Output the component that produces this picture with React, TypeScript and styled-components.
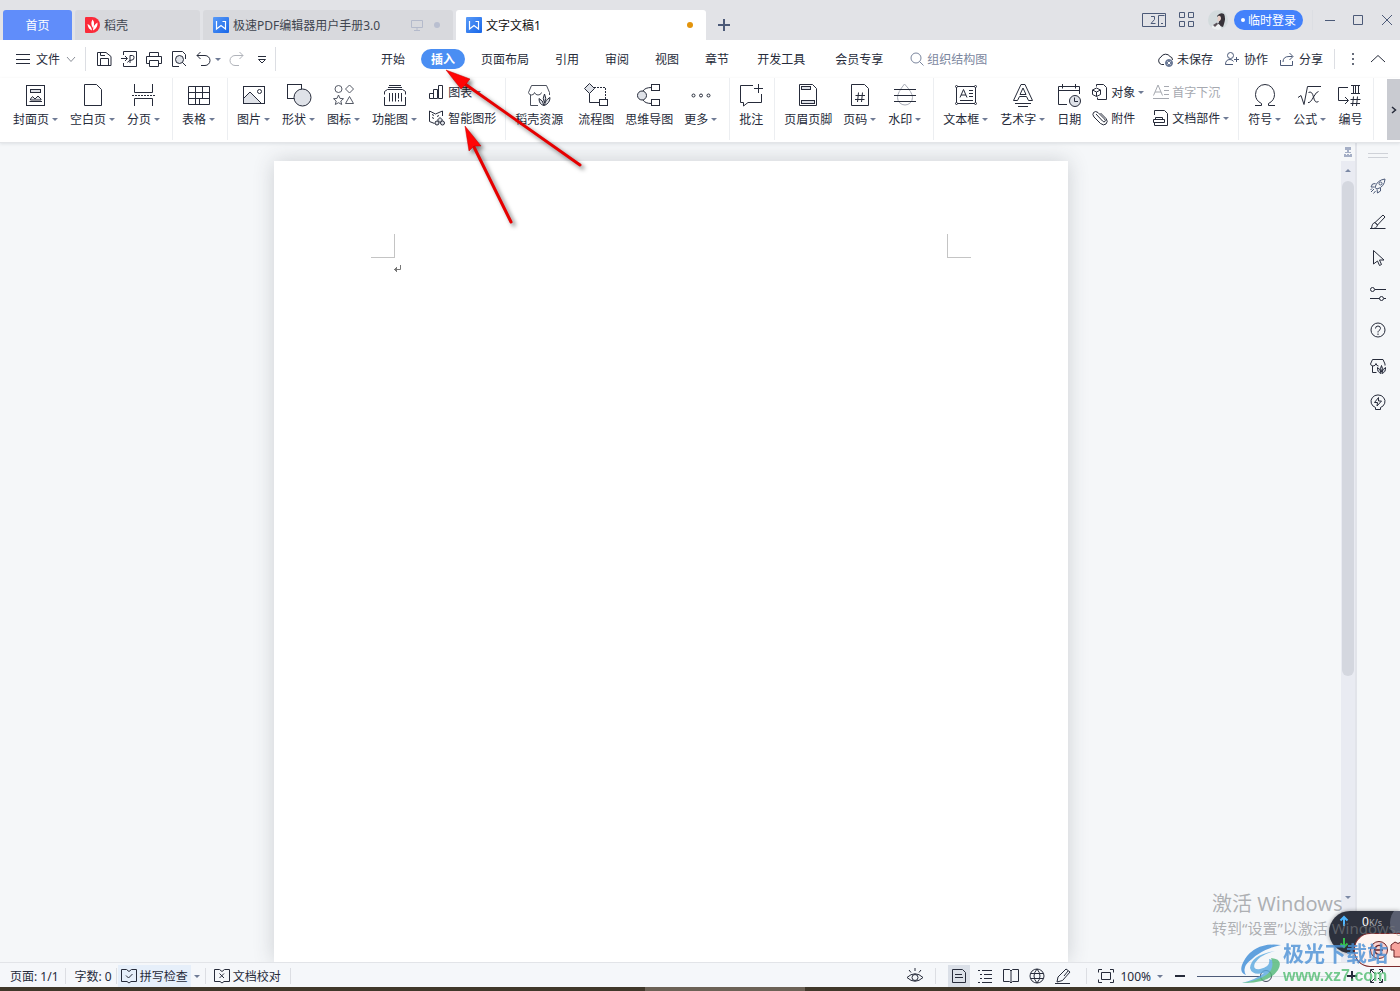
import React from "react";
import styled, { createGlobalStyle, css } from "styled-components";

const ink = "#262b3a";
const slate = "#4c5a78";
const muted = "#7b869e";

const GlobalStyle = createGlobalStyle`
  *, *::before, *::after { box-sizing: border-box; }
  body {
    margin: 0;
    background: #f5f7f9;
    color: ${ink};
    font: 12px/16px "Noto Sans", "Noto Sans CJK SC", sans-serif;
    overflow: hidden;
  }
  button, input { font: inherit; color: inherit; }
`;

/* ---------- shared parts ---------- */

const PlainButton = styled.button`
  display: flex;
  align-items: center;
  flex: none;
  margin: 0;
  padding: 0;
  border: 0;
  background: none;
  white-space: nowrap;
`;

const Label = styled.span`
  padding-top: 2px;
  white-space: nowrap;
`;

const IconSvg = styled.svg<{ $color?: string }>`
  display: block;
  flex: none;
  overflow: visible;
  fill: none;
  stroke: currentColor;
  ${(p) => p.$color && css`color: ${p.$color};`}
`;

type IconProps = { w?: number; h?: number; color?: string; children?: React.ReactNode };
const Icon = ({ w = 16, h = w, color, children }: IconProps) => (
  <IconSvg width={w} height={h} viewBox={`0 0 ${w} ${h}`} $color={color} aria-hidden="true">
    {children}
  </IconSvg>
);

const Caret = styled.span`
  flex: none;
  width: 0;
  height: 0;
  margin-left: 3px;
  border: 3px solid transparent;
  border-top-color: #6f7b95;
  border-bottom: 0;
`;

const Rule = styled.span<{ $h: number; $gap?: number }>`
  flex: none;
  width: 1px;
  height: ${(p) => p.$h}px;
  margin: 0 ${(p) => p.$gap ?? 0}px;
  background: #dcdee3;
`;

/* ---------- frame ---------- */

const Window = styled.div`
  position: relative;
  display: flex;
  flex-direction: column;
  height: 100vh;
  overflow: hidden;
`;

const TitleBar = styled.header`
  display: flex;
  align-items: flex-end;
  flex: none;
  height: 40px;
  padding-left: 3px;
  background: #e2e3e7;
`;

const TabStrip = styled.div`
  display: flex;
  gap: 3px;
`;

const DocTab = styled(PlainButton)<{ $width: number; $kind?: "home" | "active" }>`
  width: ${(p) => p.$width}px;
  height: 30px;
  padding: 0 13px 0 10px;
  gap: 4px;
  border-radius: 3px 3px 0 0;
  background: #d8d9dd;
  color: #40454f;
  ${(p) => p.$kind === "home" && css`justify-content: center; padding: 0; background: #608dfa; color: #fff;`}
  ${(p) => p.$kind === "active" && css`background: #fff; color: #111;`}
`;

const TabTail = styled.span`
  display: flex;
  align-items: center;
  gap: 11px;
  margin-left: auto;
`;

const Dot = styled.span<{ $color: string }>`
  width: 6px;
  height: 6px;
  border-radius: 50%;
  background: ${(p) => p.$color};
`;

const NewTab = styled(PlainButton)`
  height: 30px;
  padding: 0 11px;
  color: ${slate};
`;

const WindowTools = styled.div`
  display: flex;
  align-items: center;
  height: 40px;
  margin-left: auto;
  padding-right: 7px;
  color: ${slate};
`;

const WindowButton = styled(PlainButton)<{ $before?: number }>`
  margin-left: ${(p) => p.$before ?? 12}px;
`;

const LoginButton = styled(PlainButton)`
  height: 20px;
  margin: 0 9px 0 6px;
  padding: 0 7px;
  gap: 3px;
  border-radius: 10px;
  background: #4381fb;
  color: #fff;
`;

const LoginDot = styled.span`
  width: 4px;
  height: 4px;
  border-radius: 50%;
  background: #fff;
`;

/* ---------- menu row ---------- */

const MenuBar = styled.div`
  display: flex;
  align-items: center;
  flex: none;
  height: 38px;
  padding-left: 16px;
  background: #fff;
`;

const FileButton = styled(PlainButton)`
  gap: 6px;
  margin-right: 9px;
`;

const QuickTools = styled.div`
  display: flex;
  align-items: center;
  gap: 9px;
  padding: 0 6px 0 10px;
`;

const UndoButton = styled(PlainButton)`
  gap: 2px;
`;

const MenuNav = styled.nav`
  display: flex;
  align-items: center;
  gap: 6px;
  margin-left: 95px;
`;

const MenuTab = styled(PlainButton)<{ $active?: boolean; $wide?: boolean }>`
  height: 20px;
  padding: 0 ${(p) => (p.$wide ? 12 : 10)}px;
  border-radius: 10px;
  ${(p) => p.$active && css`background: #4a8ef3; color: #fff; font-weight: 700;`}
`;

const SearchField = styled.label`
  display: flex;
  align-items: center;
  gap: 3px;
  margin-left: 9px;
  color: ${muted};
`;

const SearchInput = styled.input`
  width: 80px;
  height: 20px;
  padding: 0;
  border: 0;
  outline: 0;
  background: none;
  &::placeholder { color: ${muted}; opacity: 1; }
`;

const MenuActions = styled.div`
  display: flex;
  align-items: center;
  gap: 11px;
  margin-left: auto;
  padding-right: 15px;
`;

const MenuAction = styled(PlainButton)`
  gap: 4px;
`;

const MenuMarks = styled.div`
  display: flex;
  align-items: center;
  gap: 12px;
`;

/* ---------- ribbon ---------- */

const Ribbon = styled.div`
  position: relative;
  z-index: 2;
  display: flex;
  flex: none;
  height: 65px;
  border-bottom: 1px solid #e3e5e8;
  background: #fff;
  box-shadow: 0 1px 3px rgba(60, 70, 90, 0.12);
`;

const RibbonItems = styled.div`
  display: flex;
  flex: 1;
  min-width: 0;
  overflow: hidden;
  padding-left: 13px;
`;

const RibbonRule = styled.span`
  flex: none;
  width: 1px;
  height: 62px;
  margin-right: 9px;
  background: #eceef1;
`;

const RibbonButton = styled(PlainButton)<{ $menu?: boolean; $after?: number }>`
  flex-direction: column;
  justify-content: flex-start;
  gap: 3px;
  height: 62px;
  margin-right: ${(p) => p.$after ?? 11}px;
  padding: 5px ${(p) => (p.$menu ? 1 : 0)}px 0 0;
`;

const ButtonLabel = styled.span`
  display: flex;
  align-items: center;
`;

const RibbonColumn = styled.div`
  display: flex;
  flex-direction: column;
  flex: none;
  margin-right: 9px;
  padding-top: 1px;
`;

const RowButton = styled(PlainButton)<{ $off?: boolean }>`
  gap: 3px;
  height: 26px;
  ${(p) => p.$off && css`color: #a6a9b0;`}
`;

const RibbonScroll = styled(PlainButton)`
  justify-content: center;
  width: 13px;
  height: 61px;
  margin-top: 1px;
  background: #c9cbd1;
`;

/* ---------- work area ---------- */

const Body = styled.main`
  display: flex;
  flex: 1;
  min-height: 0;
`;

const Canvas = styled.section`
  display: flex;
  justify-content: center;
  flex: 1;
  min-width: 0;
  padding-top: 18px;
  overflow: hidden;
`;

const Sheet = styled.article`
  flex: 0 1 794px;
  padding: 73px 97px 0;
  background: #fff;
  box-shadow: 0 0 20px rgba(50, 55, 65, 0.2);
`;

const MarginMarks = styled.div`
  display: flex;
  justify-content: space-between;
`;

const Corner = styled.span<{ $side: "left" | "right" }>`
  width: 24px;
  height: 24px;
  border-bottom: 1px solid #c4c4c4;
  ${(p) => (p.$side === "left" ? css`border-right: 1px solid #c4c4c4;` : css`border-left: 1px solid #c4c4c4;`)}
`;

const Paragraph = styled.p`
  margin: 6px 0 0 22px;
`;

const ScrollGutter = styled.div`
  display: flex;
  flex-direction: column;
  align-items: center;
  flex: none;
  width: 16px;
  border-right: 2px solid #e2e4ea;
`;

const RulerToggle = styled(PlainButton)`
  height: 18px;
  color: #a5afc6;
`;

const ScrollTrack = styled.div`
  display: flex;
  flex-direction: column;
  align-items: center;
  flex: 1;
  align-self: stretch;
  padding-bottom: 54px;
  background: #e9ebf2;
`;

const ScrollArrow = styled(PlainButton)`
  justify-content: center;
  height: 20px;
  color: #7c89a5;
`;

const ScrollRange = styled.div`
  flex: 1;
  width: 12px;
`;

const ScrollThumb = styled.div`
  height: 70%;
  border-radius: 6px;
  background: #d4d7df;
`;

const SideBar = styled.aside`
  display: flex;
  flex-direction: column;
  align-items: center;
  flex: none;
  gap: 20px;
  width: 43px;
  padding: 10px 2px 0 0;
`;

const Grip = styled.span`
  width: 20px;
  height: 5px;
  border: solid #cfd2d8;
  border-width: 1px 0;
`;

/* ---------- status bar ---------- */

const StatusBar = styled.footer`
  display: flex;
  align-items: center;
  flex: none;
  height: 25px;
  padding: 2px 13px 0 10px;
  border-top: 1px solid #e2e4e8;
  background: #f5f7fa;
`;

const StatusButton = styled(PlainButton)<{ $tint?: string }>`
  height: 22px;
  padding: 0 3px;
  gap: 3px;
  background: ${(p) => p.$tint ?? "none"};
`;

const StatusRight = styled.div`
  display: flex;
  align-items: center;
  margin-left: auto;
`;

const ViewButton = styled(PlainButton)<{ $on?: boolean }>`
  justify-content: center;
  width: 22px;
  height: 22px;
  margin-right: 4px;
  background: ${(p) => (p.$on ? "#dbe0e8" : "none")};
`;

const ZoomRange = styled.input`
  width: 140px;
  height: 14px;
  margin: 0 10px 0 7px;
  appearance: none;
  background: linear-gradient(${slate}, ${slate}) 0 50% / 64px 1px no-repeat,
    linear-gradient(#d3d7de, #d3d7de) 0 50% / 100% 1px no-repeat;
  &::-webkit-slider-thumb {
    appearance: none;
    width: 12px;
    height: 12px;
    border: 1px solid #3e4659;
    border-radius: 50%;
    background: #f5f7fa;
  }
`;

const Taskbar = styled.div`
  display: flex;
  justify-content: center;
  flex: none;
  height: 4px;
  padding-left: 50px;
  background: #40382a;
`;

const TaskbarItem = styled.span`
  width: 160px;
  background: #6c6256;
`;

/* ---------- overlays ---------- */

const ArrowLayer = styled.svg`
  position: absolute;
  z-index: 5;
  left: 420px;
  top: 60px;
  pointer-events: none;
  filter: drop-shadow(3px 3px 2px rgba(0, 0, 0, 0.5));
`;

const Activation = styled.div`
  position: absolute;
  z-index: 7;
  right: 0;
  bottom: 52px;
  width: 188px;
  overflow: hidden;
  color: rgba(125, 128, 132, 0.6);
  white-space: nowrap;
  pointer-events: none;
`;

const ActivationTitle = styled.div`
  font-size: 20px;
  line-height: 26px;
`;

const ActivationNote = styled.div`
  font-size: 15px;
  line-height: 22px;
`;

const SpeedPill = styled.div`
  position: absolute;
  z-index: 4;
  right: 0;
  bottom: 38px;
  display: flex;
  gap: 13px;
  width: 71px;
  height: 42px;
  padding: 3px 0 0 10px;
  border-radius: 21px 0 0 21px;
  overflow: hidden;
  background: #2d313d;
  color: #fff;
  box-shadow: 0 0 4px rgba(0, 0, 0, 0.4);
`;

const SpeedUnit = styled.span`
  color: #a9acb3;
  font-size: 9px;
`;

const SpeedOrb = styled.span`
  position: absolute;
  right: -30px;
  top: -8px;
  width: 40px;
  height: 40px;
  border-radius: 50%;
  background: #5a5f70;
`;

const ImeBadge = styled.div`
  position: absolute;
  z-index: 6;
  right: 0;
  bottom: 24px;
  display: flex;
  align-items: center;
  width: 46px;
  height: 34px;
  padding-left: 14px;
  border: 1px solid #7d2a2c;
  border-right: 0;
  border-radius: 16px 0 0 16px;
  background: #fff4f0;
  color: #6b2226;
`;

const SiteMark = styled.div`
  position: absolute;
  z-index: 8;
  right: 12px;
  bottom: 6px;
  display: flex;
  align-items: center;
  gap: 1px;
  opacity: 0.8;
  pointer-events: none;
`;

const SiteText = styled.div`
  padding-bottom: 3px;
  color: #4a90d6;
  font-size: 21px;
  font-weight: 700;
  line-height: 22px;
  white-space: nowrap;
`;

const SiteUrl = styled.div`
  color: #52bd72;
  font: 700 16px/18px "Liberation Sans", sans-serif;
`;

/* ---------- drawings ---------- */

const grey = "#dfe2e8";

const WpsLogo = () => (
  <Icon w={16}>
    <defs>
      <linearGradient id="wps" x1="0" y1="0" x2="1" y2="1">
        <stop offset="0" stopColor="#5a9bf8" />
        <stop offset="1" stopColor="#1766e8" />
      </linearGradient>
    </defs>
    <rect width="16" height="16" rx="1" fill="url(#wps)" stroke="none" />
    <path d="M3.500 4V12L8 8.500L12.500 12V4.500H9.500" stroke="#fff" strokeWidth="1.200" />
  </Icon>
);

const DocerLogo = () => (
  <Icon w={15} h={16}>
    <path d="M1 0H7A8 8 0 0 1 7 16H1Q0 16 0 15V1Q0 0 1 0Z" fill="#fb2b3a" stroke="none" />
    <path d="M7.500 2.500Q10.500 6 8 11Q5 7 7.500 2.500ZM12.500 5.500Q13 11 8 13.500Q8 8 12.500 5.500ZM2.500 7Q6.500 8.500 7 13.500Q3 12 2.500 7Z" fill="#fff" stroke="none" />
  </Icon>
);

const Avatar = () => (
  <Icon w={20}>
    <clipPath id="face"><circle cx="10" cy="10" r="10" /></clipPath>
    <g clipPath="url(#face)" stroke="none">
      <rect width="20" height="20" fill="#d3dbdd" />
      <path d="M9 6Q12 2 16 4Q18 8 16 14L15 17L12 16L10 14Q13 9 9 6Z" fill="#38333a" />
      <path d="M10 6Q13 5 13 9Q12 12 9.500 11Z" fill="#e8cfc6" />
      <path d="M4 16Q8 12 12 15L14 20H3Z" fill="#eef1f1" />
      <path d="M5 15L9 12.500L10 14L7 17Z" fill="#5b5258" />
    </g>
  </Icon>
);

const art = {
  cover: (
    <>
      <rect x="2.500" y="2.500" width="18" height="20" />
      <rect x="6.500" y="6.500" width="10" height="3" fill={grey} />
      <path d="M5.500 18.500H18M6.500 16L8.500 13.500L11 16L14 13L17 16V17H6.500Z" fill={grey} />
    </>
  ),
  blank: <path d="M3.500 1.500H15.500L20.500 6.500V22.500H3.500Z" />,
  pageBreak: (
    <>
      <path d="M2.500 1V9.500H20.500V1M2.500 23V15.500H20.500V23" />
      <path d="M0 12.500H23" strokeDasharray="2 1" />
    </>
  ),
  table: <path d="M1.500 3.500H22.500V21.500H1.500ZM1.500 9.500H22.500M1.500 15.500H22.500M8.500 3.500V21.500M15.500 3.500V15.500M12.500 15.500V21.500" />,
  picture: (
    <>
      <path d="M2 15L8 9L19.500 20.500H2Z" fill={grey} stroke="none" />
      <rect x="1.500" y="3.500" width="21" height="17" />
      <path d="M2 15L8 9L19.500 20.500" />
      <circle cx="17.500" cy="8.500" r="2" />
    </>
  ),
  shapes: (
    <>
      <rect x=".5" y="1.500" width="14" height="14" />
      <circle cx="15.500" cy="14.500" r="8.500" fill={grey} />
    </>
  ),
  glyphs: (
    <g stroke="#555a66">
      <circle cx="6.500" cy="6" r="3.500" />
      <path d="M17.500 2L21.500 6L17.500 10L13.500 6ZM17.500 13.500L21.500 20.500H13.500Z" />
      <path d="M6.500 12L8 15.400L11.500 15.700L8.800 18L9.700 21.500L6.500 19.700L3.300 21.500L4.200 18L1.500 15.700L5 15.400Z" />
    </g>
  ),
  functionChart: (
    <>
      <path d="M6 2.500H18M5 4.500H19M1.500 11.500V8.500L4.500 6.500H19.500L22.500 8.500V11.500M4 22.500H1.500V14M20 22.500H22.500V14M4 22.500H20" />
      <path d="M6.500 10V18.500M9.500 10V18.500M12.500 10V18.500M15.500 10V15.500M15.500 17V18.500M18.500 10V18.500" />
    </>
  ),
  docer: (
    <>
      <path d="M11 22.500H3.500V12M1.500 9.500L4.500 2.500H19.500L22.500 9.500V12M1.500 9.500Q2 12 4.500 12Q7 12 7.500 9.500Q8.500 12 11 12Q14 12 14.500 9.500" stroke="#4b505c" />
      <path d="M17.500 11Q20 15 17.500 20Q15 15 17.500 11ZM23 14.500Q23 20 17.500 22.500Q18 17 23 14.500ZM12 15.500Q16 17 17 22.500Q12 21.500 12 15.500Z" fill={grey} />
    </>
  ),
  flow: (
    <>
      <path d="M5.500 .5L10.500 5.500L5.500 10.500L.5 5.500Z" fill={grey} />
      <path d="M10 4.500H21.500V16" strokeDasharray="2 1" />
      <path d="M5.500 10.500V19.500H15.500" />
      <rect x="15.500" y="16.500" width="8" height="6" />
    </>
  ),
  mind: (
    <>
      <path d="M6 8Q8 4.500 14.500 4.500M6 17Q8 20.500 14.500 20.500" />
      <circle cx="5" cy="12.500" r="4.500" fill={grey} />
      <rect x="14.500" y="1.500" width="8" height="6" />
      <rect x="14.500" y="16.500" width="8" height="6" />
    </>
  ),
  more: (
    <>
      <circle cx="4.500" cy="12.500" r="1.500" />
      <circle cx="12" cy="12.500" r="1.500" />
      <circle cx="19.500" cy="12.500" r="1.500" />
    </>
  ),
  comment: <path d="M14 2.500H1.500V19.500H4.500V23L9 19.500H22.500V11M19.500 1V10M15 5.500H24" />,
  header: (
    <>
      <path d="M3.500 1.500H16.500L20.500 5.500V22.500H3.500Z" />
      <rect x="5.500" y="3.500" width="9" height="3" fill={grey} />
      <rect x="5.500" y="17.500" width="13" height="3" fill={grey} />
    </>
  ),
  pageNumber: <path d="M3.500 1.500H16.500L20.500 5.500V22.500H3.500ZM10.500 9.500L9.500 19M14.500 9.500L13.500 19M7.500 12.500H17M7 16.500H16.500" />,
  watermark: (
    <>
      <path d="M11.500 1Q19.500 9.500 19.500 14.500A7.500 7.500 0 0 1 4.500 14.500Q4.500 9.500 11.500 1Z" stroke="#a9adb8" />
      <path d="M1 6.500H23M1 12.500H23M1 18.500H23" />
    </>
  ),
  textBox: (
    <>
      <rect x="2.500" y="3.500" width="19" height="17" />
      <path d="M6 14.500L9.500 6.500L13 14.500M7 12H12M15 7.500H19M15 10.500H19M15 13.500H19M6 17.500H19" />
      <g fill="#fff">
        <circle cx="2.500" cy="3.500" r="1" />
        <circle cx="21.500" cy="3.500" r="1" />
        <circle cx="2.500" cy="20.500" r="1" />
        <circle cx="21.500" cy="20.500" r="1" />
      </g>
    </>
  ),
  wordArt: <path d="M2.500 17.500L10 1.500H14L21.500 17.500H17.500L15.500 13.500H8.500L6.500 17.500ZM9 11.500L12 5L15 11.500ZM4 20.500H20M7 23.500H17" />,
  date: (
    <>
      <path d="M10 21.500H1.500V3.500H22.500V11M1.500 7.500H22.500M5.500 1V5.500M18.500 1V5.500" />
      <circle cx="18" cy="18" r="5.500" fill={grey} />
      <path d="M17.500 14.500V18.500H21" />
    </>
  ),
  omega: <path d="M2 22.500H8.500V20.500Q2.500 17.500 2.500 11.500A9.500 10 0 0 1 21.500 11.500Q21.500 17.500 15.500 20.500V22.500H22" />,
  formula: <path d="M0 14.500L3 12.500L6 21.500L9.500 3.500H23M10.500 9.500Q14 7.500 15.500 14Q17 21 20.500 18.500M20.500 8.500Q18.500 8.500 15.500 14Q12 20.500 10 19.500" />,
  numbering: (
    <path d="M10 4.500H.5V17.500H10M7 14L10.500 17.500L7 21M13 2.500H22M13 10.500H22M15.500 2.500V10.500M17.500 2.500V10.500M20.500 2.500V10.500M15.500 13.500L14.500 23M19.500 13.500L18.500 23M12.500 16.500H22.500M12.500 20.500H22" />
  ),
};

type ToolProps = { label: string; icon: keyof typeof art; menu?: boolean; after?: number };
const Tool = ({ label, icon, menu, after }: ToolProps) => (
  <RibbonButton type="button" $menu={menu} $after={after}>
    <Icon w={24}>{art[icon]}</Icon>
    <ButtonLabel>
      <Label>{label}</Label>
      {menu && <Caret />}
    </ButtonLabel>
  </RibbonButton>
);

type RowToolProps = { label: string; menu?: boolean; off?: boolean; children: React.ReactNode };
const RowTool = ({ label, menu, off, children }: RowToolProps) => (
  <RowButton type="button" $off={off}>
    <Icon>{children}</Icon>
    <ButtonLabel>
      <Label>{label}</Label>
      {menu && <Caret />}
    </ButtonLabel>
  </RowButton>
);

export default function App() {
  return (
    <Window>
      <GlobalStyle />

      <TitleBar>
        <TabStrip>
          <DocTab type="button" $width={69} $kind="home"><Label>首页</Label></DocTab>
          <DocTab type="button" $width={125}><DocerLogo /><Label>稻壳</Label></DocTab>
          <DocTab type="button" $width={250}>
            <WpsLogo /><Label>极速PDF编辑器用户手册3.0</Label>
            <TabTail>
              <Icon w={12} color="#b4bacb"><path d="M.5 1.500H11.500V8.500H.5ZM6 9V11M3 11.500H9" /></Icon>
              <Dot $color="#b9bfd0" />
            </TabTail>
          </DocTab>
          <DocTab type="button" $width={250} $kind="active">
            <WpsLogo /><Label>文字文稿1</Label>
            <TabTail><Dot $color="#e3940c" /></TabTail>
          </DocTab>
        </TabStrip>
        <NewTab type="button" aria-label="新建标签">
          <Icon w={14}><path d="M7 1V13M1 7H13" strokeWidth="2" /></Icon>
        </NewTab>
        <WindowTools>
          <WindowButton type="button" aria-label="窗口布局">
            <Icon w={24} h={16}>
              <path d="M23.500 3V1.500H.5V14.500H23.500V13M22.500 3.500H16.500V14.500M19 11.500H21M23.500 3V14.500" />
              <path d="M9 4.500H12.500V7.500L9 11.500H13.500" />
            </Icon>
          </WindowButton>
          <WindowButton type="button" aria-label="应用">
            <Icon w={16}><path d="M1.500 .5H6.500V5.500H1.500ZM10.500 .5H15.500V5.500H10.500ZM1.500 9.500H6.500V14.500H1.500ZM10.500 9.500H15.500V14.500H10.500Z" /></Icon>
          </WindowButton>
          <WindowButton type="button" $before={14} aria-label="账号"><Avatar /></WindowButton>
          <LoginButton type="button"><LoginDot /><Label>临时登录</Label></LoginButton>
          <Rule $h={20} />
          <WindowButton type="button" aria-label="最小化"><Icon w={10}><path d="M0 5.500H10" /></Icon></WindowButton>
          <WindowButton type="button" $before={18} aria-label="最大化"><Icon w={10}><path d="M.5 .5H9.500V9.500H.5Z" /></Icon></WindowButton>
          <WindowButton type="button" $before={18} aria-label="关闭"><Icon w={12}><path d="M1 1L11 11M11 1L1 11" /></Icon></WindowButton>
        </WindowTools>
      </TitleBar>

      <MenuBar>
        <FileButton type="button">
          <Icon w={14}><path d="M0 2.500H14M0 7.500H14M0 11.500H14" /></Icon>
          <Label>文件</Label>
          <Icon w={10} color="#8b8f98"><path d="M1 3L5 7.500L9 3" /></Icon>
        </FileButton>
        <Rule $h={24} />
        <QuickTools>
          <PlainButton type="button" aria-label="保存">
            <Icon><path d="M1.500 1.500H10L15 5.500V14.500H1.500ZM4.500 14.500V7.500H12.500V14.500M4.500 1.500V4.500H9" /></Icon>
          </PlainButton>
          <PlainButton type="button" aria-label="输出为PDF">
            <Icon><path d="M2.500 4V.5H15.500V15.500H2.500V12M0 7.500H6M4 5L6.500 7.500L4 10M9 12V4.500H11.500Q13 4.500 13 6.500Q13 9 11 9Q7.500 9 6.500 11.500" /></Icon>
          </PlainButton>
          <PlainButton type="button" aria-label="打印">
            <Icon><path d="M3.500 5V1.500H12.500V5M3.500 12.500H.5V5.500H15.500V12.500H12.500M3.500 9.500H12.500V15.500H3.500Z" /></Icon>
          </PlainButton>
          <PlainButton type="button" aria-label="打印预览">
            <Icon><path d="M8 15.500H1.500V.5H11.500L14.500 3.500V8M11 11L15 15" /><circle cx="8.500" cy="8.500" r="4" fill={grey} /></Icon>
          </PlainButton>
          <UndoButton type="button" aria-label="撤销">
            <Icon w={14} h={16}><path d="M4.500 1L1 4.500L4.500 8M1 4.500H9A4.500 4.500 0 0 1 9 14.500H5" /></Icon>
            <Caret />
          </UndoButton>
          <PlainButton type="button" aria-label="恢复">
            <Icon w={14} h={16} color="#b0b3ba"><path d="M9.500 1L13 4.500L9.500 8M13 4.500H5A4.500 4.500 0 0 0 5 14.500H9" /></Icon>
          </PlainButton>
          <PlainButton type="button" aria-label="自定义快速访问工具栏">
            <Icon><path d="M5 5.500H13M5.500 8.500L9 12L12.500 8.500Z" /></Icon>
          </PlainButton>
        </QuickTools>
        <Rule $h={24} />
        <MenuNav>
          <MenuTab type="button"><Label>开始</Label></MenuTab>
          <MenuTab type="button" $active><Label>插入</Label></MenuTab>
          <MenuTab type="button"><Label>页面布局</Label></MenuTab>
          <MenuTab type="button"><Label>引用</Label></MenuTab>
          <MenuTab type="button"><Label>审阅</Label></MenuTab>
          <MenuTab type="button"><Label>视图</Label></MenuTab>
          <MenuTab type="button"><Label>章节</Label></MenuTab>
          <MenuTab type="button" $wide><Label>开发工具</Label></MenuTab>
          <MenuTab type="button" $wide><Label>会员专享</Label></MenuTab>
          <SearchField>
            <Icon w={14}><circle cx="6" cy="6" r="5" /><path d="M9.500 9.500L13.500 13.500" /></Icon>
            <SearchInput type="text" aria-label="搜索命令" placeholder="组织结构图" />
          </SearchField>
        </MenuNav>
        <MenuActions>
          <MenuAction type="button">
            <Icon><path d="M7 13.500H4.500A4 4 0 0 1 4 6A5 4.500 0 0 1 13 5.500Q15.500 6 15.500 9" /><circle cx="12" cy="12" r="3.500" fill="#6b7996" stroke="#6b7996" /><path d="M10.500 10.500L13.500 13.500M13.500 10.500L10.500 13.500" stroke="#fff" /></Icon>
            <Label>未保存</Label>
          </MenuAction>
          <MenuAction type="button">
            <Icon color={slate}><circle cx="6.500" cy="4.500" r="3" /><path d="M9 13.500H1.500Q1.500 8.500 6 8.500Q8.500 8.500 9.500 10.500M12.500 6V11M10 8.500H15" /></Icon>
            <Label>协作</Label>
          </MenuAction>
          <MenuAction type="button">
            <Icon color={slate}><path d="M1.500 9V14.500H13.500V10M4 11Q4 5.500 10 5.500H13.500M10.500 2L14 5.500L10.500 9" /></Icon>
            <Label>分享</Label>
          </MenuAction>
          <MenuMarks>
            <Rule $h={20} />
            <PlainButton type="button" aria-label="更多选项">
              <Icon w={12} h={14}><path d="M6 1V3M6 6V8M6 11V13" strokeWidth="2" stroke="#666c7a" /></Icon>
            </PlainButton>
            <PlainButton type="button" aria-label="收起功能区">
              <Icon w={14}><path d="M0 10L7 3.500L14 10" /></Icon>
            </PlainButton>
          </MenuMarks>
        </MenuActions>
      </MenuBar>

      <Ribbon>
        <RibbonItems>
          <Tool label="封面页" icon="cover" menu />
          <Tool label="空白页" icon="blank" menu />
          <Tool label="分页" icon="pageBreak" menu />
          <RibbonRule />
          <Tool label="表格" icon="table" menu />
          <RibbonRule />
          <Tool label="图片" icon="picture" menu />
          <Tool label="形状" icon="shapes" menu />
          <Tool label="图标" icon="glyphs" menu />
          <Tool label="功能图" icon="functionChart" menu />
          <RibbonColumn>
            <RowTool label="图表" menu><path d="M.5 9.500H4.500V14.500H.5ZM4.500 5.500H8.500V14.500H4.500ZM9.500 1.500H13.500V14.500H9.500Z" /></RowTool>
            <RowTool label="智能图形">
              <path d="M5.500 13.500L.5 11.500V1L6.500 4L13.500 1V6M3 4.500L5 5.500M3 7.500L5 8.500M8 6.500L10 5.500" />
              <path d="M11 7.500L13.500 10L11 12.500L8.500 10Z" fill={grey} />
              <circle cx="8" cy="13" r="2" fill={grey} />
              <circle cx="13.500" cy="13" r="2" fill={grey} />
            </RowTool>
          </RibbonColumn>
          <RibbonRule />
          <Tool label="稻壳资源" icon="docer" after={15} />
          <Tool label="流程图" icon="flow" />
          <Tool label="思维导图" icon="mind" />
          <Tool label="更多" icon="more" menu />
          <RibbonRule />
          <Tool label="批注" icon="comment" />
          <RibbonRule />
          <Tool label="页眉页脚" icon="header" />
          <Tool label="页码" icon="pageNumber" menu />
          <Tool label="水印" icon="watermark" menu />
          <RibbonRule />
          <Tool label="文本框" icon="textBox" menu />
          <Tool label="艺术字" icon="wordArt" menu />
          <Tool label="日期" icon="date" />
          <RibbonColumn>
            <RowTool label="对象" menu>
              <path d="M4.500 2.500V.5H11.500L14.500 3.500V15.500H5.500V13.500" />
              <path d="M4.500 4L8.500 6V10.500L4.500 12.500L.5 10.500V6ZM.5 6L4.500 8L8.500 6M4.500 8V12.500" />
            </RowTool>
            <RowTool label="附件">
              <path d="M4 4L10.500 11Q12 12.500 13 11.500Q14 10.500 12.500 9L6 2.500Q3.500 .5 1.500 2.500Q0 4.500 2 7L8.500 13.500Q11.500 16 14 14Q16.500 11.500 14 8.500L8.500 3" />
            </RowTool>
          </RibbonColumn>
          <RibbonColumn>
            <RowTool label="首字下沉" off>
              <path d="M.5 11.500L5 1L9.500 11.500M2 8H8M11 2.500H16M11 6.500H16M11 10.500H16M0 14.500H16" />
            </RowTool>
            <RowTool label="文档部件" menu>
              <path d="M1.500 5V.5H11.500L14.500 3.500V15.500H1.500V13" />
              <path d="M2.500 9V7.500H9.500V9M.5 9.500H11.500V12.500H.5Z" />
            </RowTool>
          </RibbonColumn>
          <RibbonRule />
          <Tool label="符号" icon="omega" menu />
          <Tool label="公式" icon="formula" menu />
          <Tool label="编号" icon="numbering" />
          <RibbonRule />
        </RibbonItems>
        <RibbonScroll type="button" aria-label="向右滚动">
          <Icon w={8}><path d="M2 1L5.500 4L2 7" strokeWidth="1.500" /></Icon>
        </RibbonScroll>
      </Ribbon>

      <Body>
        <Canvas>
          <Sheet>
            <MarginMarks>
              <Corner $side="left" />
              <Corner $side="right" />
            </MarginMarks>
            <Paragraph>
              <Icon w={10} color="#777"><path d="M7.500 1V5.500H1M4 3L1.500 5.500L4 8M3.500 4V7" /></Icon>
            </Paragraph>
          </Sheet>
        </Canvas>
        <ScrollGutter>
          <RulerToggle type="button" aria-label="标尺">
            <Icon w={10}>
              <path d="M2 0H8V3H6V5H8V6H2V5H4V3H2ZM1 7H3V8H4V7H6V8H7V7H9V10H1Z" fill="currentColor" stroke="none" />
            </Icon>
          </RulerToggle>
          <ScrollTrack>
            <ScrollArrow type="button" aria-label="向上滚动"><Icon w={6} h={4}><path d="M3 0L6 3H0Z" fill="currentColor" stroke="none" /></Icon></ScrollArrow>
            <ScrollRange><ScrollThumb /></ScrollRange>
            <ScrollArrow type="button" aria-label="向下滚动"><Icon w={6} h={4}><path d="M0 0H6L3 3Z" fill="currentColor" stroke="none" /></Icon></ScrollArrow>
          </ScrollTrack>
        </ScrollGutter>
        <SideBar>
          <Grip />
          <PlainButton type="button" aria-label="快捷">
            <Icon color={slate}><path d="M5 9.500Q7 2 15 1Q14.500 9 7 11ZM5.500 5.500L2.500 6L1 9L4.500 9M10.500 10V13L7.500 15L7 11.500M4 11L1 14M2 10.500L.5 12M5.500 13L3.500 15.500" /><circle cx="10.500" cy="5.500" r="1.500" /></Icon>
          </PlainButton>
          <PlainButton type="button" aria-label="样式">
            <Icon><path d="M5 8.500L13 1L15 3L7.500 11M5 8.500Q2 9 1.500 14.500Q6.500 15 7.500 11ZM5 8.500L7.500 11M0 14.500H15.500" /></Icon>
          </PlainButton>
          <PlainButton type="button" aria-label="选择">
            <Icon><path d="M3.500 .5L14 10H9.500L11.500 14.500L9.500 15.500L7.500 11L3.500 14Z" /></Icon>
          </PlainButton>
          <PlainButton type="button" aria-label="设置">
            <Icon><path d="M5 3.500H16M0 12.500H9.500M14 12.500H16" /><circle cx="2.500" cy="3.500" r="2" /><circle cx="11.500" cy="12.500" r="2" /></Icon>
          </PlainButton>
          <PlainButton type="button" aria-label="帮助">
            <Icon><circle cx="8" cy="8" r="7" /><path d="M5.500 6.500Q5.500 4 8 4Q10.500 4 10.500 6.500Q10.500 7.500 9 8.500Q8 9 8 10.500M8 11.500V13" /></Icon>
          </PlainButton>
          <PlainButton type="button" aria-label="稻壳资源">
            <Icon>
              <path d="M6.500 14.500H2.500V8M.5 6L2.500 1.500H13L15 6V7.500M.5 6Q1 8 3 8Q5.500 8 6 5.500Q6.500 8 8.500 8" />
              <path d="M11.500 7.500Q13.500 10.500 11.500 14Q9.500 10.500 11.500 7.500ZM15.500 9.500Q16 14 12 15.500Q11.500 11.500 15.500 9.500ZM7.500 9.500Q11 11 11 15.500Q7 14 7.500 9.500Z" fill="#c9cdd6" />
            </Icon>
          </PlainButton>
          <PlainButton type="button" aria-label="灵感">
            <Icon><path d="M5.500 13.500A7 6.500 0 1 1 10.500 13.500V15.500H5.500ZM8.500 3.500L4.500 8.500H7.500L7 12L11.500 7H8.500Z" /></Icon>
          </PlainButton>
        </SideBar>
      </Body>

      <StatusBar>
        <Label>页面: 1/1</Label>
        <Rule $h={16} $gap={6} />
        <StatusButton type="button"><Label>字数: 0</Label></StatusButton>
        <Rule $h={16} $gap={1} />
        <StatusButton type="button" $tint="#e6effa">
          <Icon><path d="M5.500 1.500L8 3.500L10.500 1.500H15.500V13.500H10L8 15L6 13.500H.5V1.500ZM5 7.500L7.500 10L11.500 6" /></Icon>
          <Label>拼写检查</Label>
        </StatusButton>
        <PlainButton type="button" aria-label="拼写检查选项"><Caret /></PlainButton>
        <Rule $h={16} $gap={5} />
        <StatusButton type="button">
          <Icon><path d="M5.500 1.500L8 3.500L10.500 1.500H15.500V13.500H10L8 15L6 13.500H.5V1.500ZM5.500 5.500L10 10M10 5.500L5.500 10" /></Icon>
          <Label>文档校对</Label>
        </StatusButton>
        <Rule $h={16} $gap={6} />
        <StatusRight>
          <PlainButton type="button" aria-label="护眼模式">
            <Icon><path d="M0 9.500Q8 2 16 9.500Q8 17 0 9.500ZM8 0V3M2 2L4 4.500M14 2L12 4.500" /><circle cx="8" cy="9.500" r="3" /></Icon>
          </PlainButton>
          <Rule $h={16} $gap={12} />
          <ViewButton type="button" $on aria-label="页面视图"><Icon><path d="M1.500 1.500H11.500L14.500 4.500V14.500H1.500ZM4 6.500H11M4 9.500H12" /></Icon></ViewButton>
          <ViewButton type="button" aria-label="大纲"><Icon><path d="M1 2.500H3M5 2.500H15M3 6.500H5M7 6.500H15M3 10.500H5M7 10.500H15M1 14.500H3M5 14.500H15" /></Icon></ViewButton>
          <ViewButton type="button" aria-label="阅读版式"><Icon><path d="M.5 1.500H6.500L8 3L9.500 1.500H15.500V13.500H9.500L8 15L6.500 13.500H.5ZM8 3V15" /></Icon></ViewButton>
          <ViewButton type="button" aria-label="Web版式"><Icon><circle cx="8" cy="8" r="7" /><path d="M8 1Q2 8 8 15M8 1Q14 8 8 15M1.500 5.500H14.500M1.500 10.500H14.500" /></Icon></ViewButton>
          <ViewButton type="button" aria-label="写作模式"><Icon><path d="M3 9L11 1L15 4L7.500 12.500L2 14ZM9 8L13 3M0 15.500H15" /></Icon></ViewButton>
          <Rule $h={16} $gap={8} />
          <StatusButton type="button" aria-label="缩放"><Icon><path d="M.5 4.500V1.500H4M12 1.500H15.500V4.500M15.500 11.500V14.500H12M4 14.500H.5V11.500M3.500 4.500H12.500V11.500H3.500Z" /></Icon></StatusButton>
          <StatusButton type="button"><Label>100%</Label><Caret /></StatusButton>
          <StatusButton type="button" aria-label="缩小"><Icon w={18}><path d="M6 9H16" strokeWidth="2" /></Icon></StatusButton>
          <ZoomRange type="range" min={0} max={100} defaultValue={49} aria-label="缩放比例" />
          <PlainButton type="button" aria-label="放大"><Icon w={10}><path d="M0 5H10M5 0V10" strokeWidth="2" /></Icon></PlainButton>
          <StatusButton type="button" aria-label="全屏"><Icon w={24} h={16}><path d="M10.500 5V1.500H14M19 1.500H22.500V5M22.500 11V14.500H19M14 14.500H10.500V11M11 2L15 6M22 2L18 6M22 14L18 10M11 14L15 10" /></Icon></StatusButton>
        </StatusRight>
      </StatusBar>

      <Taskbar><TaskbarItem /></Taskbar>

      <ArrowLayer width="180" height="180" viewBox="0 0 180 180" aria-hidden="true">
        <g stroke="#e60000" strokeWidth="3" strokeLinecap="round">
          <path d="M45 24L160 105M53 85L91 162" />
        </g>
        <path d="M26 10L50 19L46 24L41 29ZM45 66L61 86L54 86L49 91Z" fill="#ff0505" stroke="#c40000" strokeWidth=".5" />
      </ArrowLayer>

      <SpeedPill>
        <Icon w={10} h={36}>
          <path d="M5 12V3M1.500 6.500L5 3L8.500 6.500" stroke="#4db5ff" strokeWidth="2" />
          <path d="M5 24V33M1.500 29.500L5 33L8.500 29.500" stroke="#35c04b" strokeWidth="2" />
        </Icon>
        <span>0<SpeedUnit>K/s</SpeedUnit></span>
        <SpeedOrb />
      </SpeedPill>
      <ImeBadge>
        <Icon w={32} h={22}>
          <circle cx="10" cy="11" r="8.500" fill="#fbd0cc" />
          <path d="M13 7.500A4.500 4.500 0 1 0 13 14.500M6 11H14" strokeWidth="1.500" />
          <path d="M22 6L26 3Q29 6 32 3V18H25V11L22 11Z" fill="#f7a49d" />
        </Icon>
      </ImeBadge>
      <Activation>
        <ActivationTitle>激活 Windows</ActivationTitle>
        <ActivationNote>转到“设置”以激活 Windows。</ActivationNote>
      </Activation>
      <SiteMark>
        <Icon w={42} h={42}>
          <g stroke="none">
            <path d="M41 2Q16 -1 5 16Q-3 29 6 32Q1 24 12 16Q22 6 41 2Z" fill="#3c8cd8" />
            <path d="M35 8Q20 12 15 20Q12 27 20 26Q31 24 29 16Q39 18 33 28Q26 38 2 40Q17 36 24 30Q12 33 10 25Q11 12 35 8Z" fill="#5aa9e0" />
            <path d="M31 15Q44 16 38 27Q29 41 2 40Q26 36 31 27Q34 21 31 15Z" fill="#50b878" />
          </g>
        </Icon>
        <div>
          <SiteText>极光下载站</SiteText>
          <SiteUrl>www.xz7.com</SiteUrl>
        </div>
      </SiteMark>
    </Window>
  );
}
